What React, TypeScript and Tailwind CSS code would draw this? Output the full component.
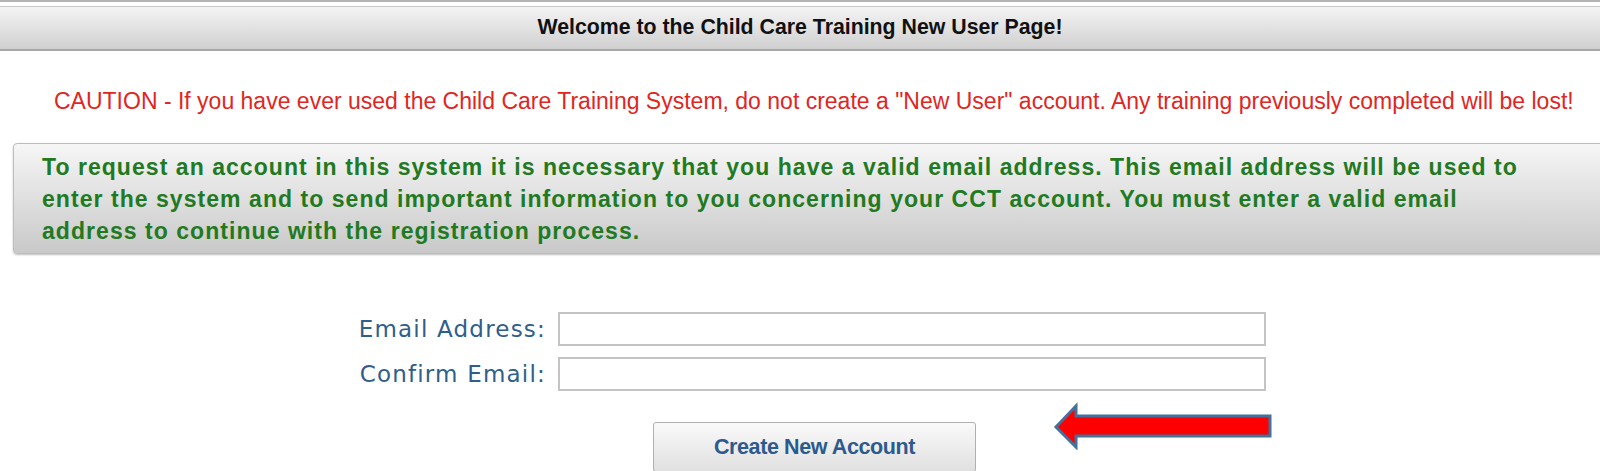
import React from 'react'

// annotation arrow drawn over the screenshot
const RedArrow = () => (
    <svg width="222" height="48" viewBox="0 0 222 48" className="absolute left-[1052px] top-[-20px]">
        <polygon
            points="4,25 24,4 24,14 218,14 218,34 24,34 24,45"
            fill="#ff0000"
            stroke="#41719c"
            strokeWidth="3"
            strokeLinejoin="miter"
        />
    </svg>
)

const FormRow = ({ label }: { label: string }) => (
    <div className="flex items-center">
        <label className="w-[558px] pr-[12px] text-right text-[23px] tracking-[1.2px] text-[#2f5e8c] font-['DejaVu_Sans',sans-serif]">
            {label}
        </label>
        <input
            type="text"
            className="w-[708px] h-[34px] border-2 border-[#c4c4c4] bg-white outline-none"
        />
    </div>
)

const App = () => {
    return (
        <div className="w-[1600px] h-[471px] overflow-hidden bg-white font-['Liberation_Sans',Arial,sans-serif]">
            {/* top bars */}
            <div className="h-[2px] bg-[#b4b4b4]" />
            <div className="h-[4px] bg-white" />
            <div className="h-[45px] flex items-center justify-center border-t border-b-2 border-t-[#c8c8c8] border-b-[#a8a8a8] bg-gradient-to-b from-[#f4f4f4] to-[#d0d0d0]">
                <h1 className="text-[21.3px] font-bold text-[#111]">Welcome to the Child Care Training New User Page!</h1>
            </div>

            {/* caution */}
            <p className="mt-[37px] pl-[54px] text-[23px] leading-[26px] text-[#e0261f] whitespace-nowrap">
                CAUTION - If you have ever used the Child Care Training System, do not create a "New User" account. Any training previously completed will be lost!
            </p>

            {/* info box */}
            <div className="mt-[29px] ml-[13px] w-[1620px] h-[111px] rounded-[4px] border border-[#bdbdbd] bg-gradient-to-b from-[#f6f6f6] to-[#c9c9c9] shadow-[0_1px_2px_rgba(0,0,0,0.25)] pl-[28px] pt-[7px]">
                <p className="w-[1540px] text-[23px] leading-[32px] font-bold tracking-[1.05px] text-[#217a21]">
                    To request an account in this system it is necessary that you have a valid email address. This email address will be used to
                    <br />
                    enter the system and to send important information to you concerning your CCT account. You must enter a valid email
                    <br />
                    address to continue with the registration process.
                </p>
            </div>

            {/* form */}
            <div className="mt-[58px] flex flex-col gap-[10px]">
                <FormRow label="Email Address:" />
                <FormRow label="Confirm Email:" />
            </div>

            <div className="relative mt-[31px]">
                <button className="ml-[653px] w-[323px] h-[50px] rounded-[3px] border border-[#b0b0b0] bg-gradient-to-b from-[#fafafa] to-[#e0e0e0] text-[21.5px] font-bold text-[#2d5a8c] tracking-[-0.4px]">
                    Create New Account
                </button>
                <RedArrow />
            </div>
        </div>
    )
}

export default App
